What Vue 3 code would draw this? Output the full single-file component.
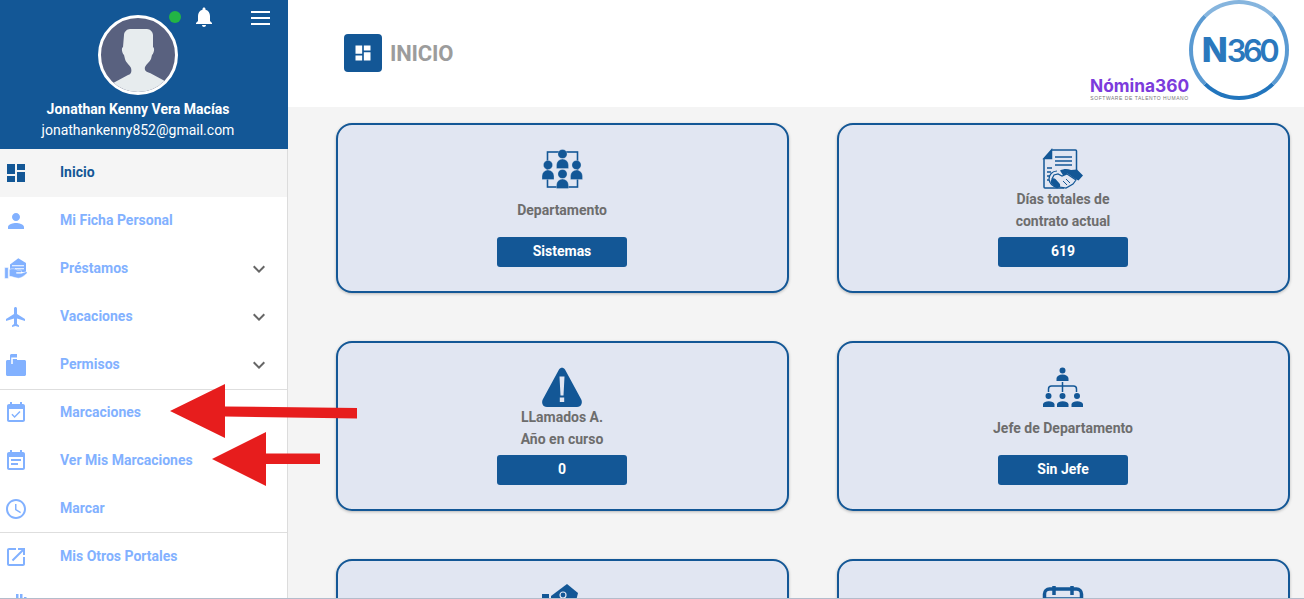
<script setup>
const menu = [
  { label: 'Inicio', active: true, d: 'M3 13h8V3H3v10zm0 8h8v-6H3v6zm10 0h8V11h-8v10zm0-18v6h8V3h-8z' },
  { label: 'Mi Ficha Personal', d: 'M12 12c2.21 0 4-1.79 4-4s-1.79-4-4-4-4 1.79-4 4 1.79 4 4 4zm0 2c-2.67 0-8 1.34-8 4v2h16v-2c0-2.66-5.33-4-8-4z' },
  { label: 'Préstamos', chevron: true, custom: 'loan' },
  { label: 'Vacaciones', chevron: true, d: 'M21 16v-2l-8-5V3.5c0-.83-.67-1.5-1.5-1.5S10 2.67 10 3.5V9l-8 5v2l8-2.5V19l-2 1.5V22l3.5-1 3.5 1v-1.5L13 19v-5.5l8 2.5z' },
  { label: 'Permisos', chevron: true, custom: 'case' },
  { label: 'Marcaciones', dividerTop: true, d: 'M16.53 11.06L15.47 10l-4.88 4.88-2.12-2.12-1.06 1.06L10.59 17l5.94-5.94zM19 3h-1V1h-2v2H8V1H6v2H5c-1.11 0-1.99.9-1.99 2L3 19c0 1.1.89 2 2 2h14c1.1 0 2-.9 2-2V5c0-1.1-.9-2-2-2zm0 16H5V8h14v11z' },
  { label: 'Ver Mis Marcaciones', d: 'M17 10H7v2h10v-2zm2-7h-1V1h-2v2H8V1H6v2H5c-1.11 0-1.99.9-1.99 2L3 19c0 1.1.89 2 2 2h14c1.1 0 2-.9 2-2V5c0-1.1-.9-2-2-2zm0 16H5V8h14v11zm-5-5H7v2h7v-2z' },
  { label: 'Marcar', divider: true, d: 'M11.99 2C6.47 2 2 6.48 2 12s4.47 10 9.99 10C17.52 22 22 17.52 22 12S17.52 2 11.99 2zM12 20c-4.42 0-8-3.58-8-8s3.58-8 8-8 8 3.58 8 8-3.58 8-8 8zm.5-13H11v6l5.25 3.15.75-1.23-4.5-2.67z' },
  { label: 'Mis Otros Portales', d: 'M19 19H5V5h7V3H5c-1.11 0-2 .9-2 2v14c0 1.1.89 2 2 2h14c1.1 0 2-.9 2-2v-7h-2v7zM14 3v2h3.59l-9.83 9.83 1.41 1.41L19 6.41V10h2V3h-7z' },
  { label: '', d: 'M8 5h2.500v17H8zM12 1h2.500v21H12zM16 1h2.500v21H16zM20 4h2.500v18H20z' },
]
const expand = 'M16.59 8.59L12 13.17 7.41 8.59 6 10l6 6 6-6z'
const person = (x, y) => `M${x + 4.600} ${y}a4.600 4.600 0 1 1-9.200 0a4.600 4.600 0 1 1 9.200 0zM${x - 6} ${y + 14.500}v-3.500a6 6 0 0 1 12 0v3.500z`
</script>

<template>
  <div class="page">
    <aside class="sidebar">
      <header class="profile">
        <svg class="avatar" viewBox="0 0 80 80" width="80" height="80">
          <defs><clipPath id="face"><circle cx="40" cy="40" r="37" /></clipPath></defs>
          <circle cx="40" cy="40" r="38.500" fill="#59617f" stroke="#fff" stroke-width="3" />
          <path clip-path="url(#face)" d="M26 20c0-3 3-6 6-6h17c3 0 6 3 6 6v12c2 1 1 6-1 8l-1 4c-1 3-5 5-6 8-1 4 2 5 5 6l13 7 5 3v12H12V70l5-3 13-7c3-1 4-3 3-7-1-3-5-5-6-9l-1-4c-2-2-3-7-1-8z" fill="#e7ecee" />
        </svg>
        <strong class="name">Jonathan Kenny Vera Macías</strong>
        <span class="email">jonathankenny852@gmail.com</span>
        <span class="dot"></span>
        <svg class="bell" viewBox="0 0 24 24" width="24" height="24"><path d="M12 22c1.100 0 2-.9 2-2h-4c0 1.100.9 2 2 2zm6-6v-5c0-3.070-1.630-5.640-4.500-6.320V4c0-.83-.67-1.500-1.500-1.500s-1.500.67-1.500 1.500v.68C7.640 5.360 6 7.920 6 11v5l-2 2v1h16v-1l-2-2z" fill="#fff" /></svg>
        <span class="burger"><i></i><i></i><i></i></span>
      </header>
      <nav class="menu">
        <a v-for="item in menu" :key="item.label" class="row" :class="{ active: item.active, divided: item.divider, 'divided-top': item.dividerTop }">
          <svg v-if="item.custom === 'loan'" class="icon" viewBox="0 0 24 24" width="24" height="24">
            <path d="M6 7.500 14.300 1.300 22 6V15H6z" fill="#82b1ff" />
            <path d="M8 8.800h12M11 11.800h9" stroke="#fff" stroke-width="1.100" />
            <path d="M.7 10.500h3.600v11H.7zM5.300 12.500c3-1.500 6-.8 8 .6h3.200c1.300 0 1.300 2.300 0 2.400h-4v.8h5l4.500-1.600c1-.2 1.500 1 .8 1.700-2.500 2.200-5.500 4.800-8.300 4.800-3.300 0-6-1.900-9.200-1.900z" fill="#82b1ff" stroke="#fff" stroke-width=".5" />
          </svg>
          <svg v-else-if="item.custom === 'case'" class="icon" viewBox="0 0 24 24" width="24" height="24">
            <path d="M6 2.500c0-.8.700-1.500 1.500-1.500H13v6h7.500c.8 0 1.500.7 1.500 1.500v13c0 .8-.7 1.500-1.500 1.500h-17C2.700 23 2 22.300 2 21.500v-13C2 7.700 2.700 7 3.500 7H6z" fill="#82b1ff" />
            <path d="M8 11V5.300H13.500" fill="none" stroke="#fff" stroke-width="1.500" />
          </svg>
          <svg v-else class="icon" viewBox="0 0 24 24" width="24" height="24"><path :d="item.d" /></svg>
          <span class="label">{{ item.label }}</span>
          <svg v-if="item.chevron" class="chev" viewBox="0 0 24 24" width="24" height="24"><path :d="expand" /></svg>
        </a>
      </nav>
    </aside>

    <main class="main">
      <header class="topbar">
        <div class="title">
          <span class="title-icon">
            <svg viewBox="0 0 24 24" width="20" height="20"><path d="M3 13h8V3H3v10zm0 8h8v-6H3v6zm10 0h8V11h-8v10zm0-18v6h8V3h-8z" fill="#fff" /></svg>
          </span>
          <h1>INICIO</h1>
        </div>
        <div class="logo">
          <div class="brand">
            <span class="brand-name">Nómina360</span>
            <span class="brand-sub">SOFTWARE DE TALENTO HUMANO</span>
          </div>
          <div class="ring">
            <span class="n360">N<span class="n360-num">360</span></span>
          </div>
        </div>
      </header>

      <section class="grid">
        <article class="card">
          <div class="card-icon">
            <svg viewBox="0 0 40 40" width="40" height="40">
              <rect x="5.500" y="3" width="30" height="35" fill="none" stroke="#135796" stroke-width="1.600" />
              <path v-for="p in [[20.500,5],[6,16],[34.500,16],[20.500,25]]" :key="p.join()" :d="person(p[0], p[1])" fill="#135796" stroke="#e1e6f2" stroke-width=".3" />
            </svg>
          </div>
          <p class="card-label">Departamento</p>
          <button class="value">Sistemas</button>
        </article>

        <article class="card">
          <div class="card-icon">
            <svg viewBox="0 0 42 40" width="42" height="40">
              <path d="M9.500 1H33.500a1 1 0 0 1 1 1V22M2 9.500 9.500 1V9.500zM2 9.500V38a1 1 0 0 0 1 1H22" fill="none" stroke="#135796" stroke-width="1.500" />
              <path d="M2 9.500 9.500 1V9.500z" fill="#135796" />
              <path d="M13 8h17M13 12h17M13 16h17M5 19h5M5 23h4M5 27h4M5 31h5" stroke="#135796" stroke-width="1.300" />
              <path d="M15 22c-5 0-8 4-8 8s4 8 8 8" fill="#e1e6f2" stroke="#135796" stroke-width="1.200" />
              <path d="M18 21.500c4-2 7-2 11-.5l6-.5 6 6-4.500 5-4-2-7-5-4 2.500z" fill="#135796" />
              <path d="M10 30l8 8 6 1 7-4 3-4-9-6-5 2-4-2-4 1z" fill="#e1e6f2" stroke="#135796" stroke-width="1.200" />
              <path d="M9.500 30.500a3 3 0 0 1 4-.5l4 4.500a3 3 0 0 1-.5 4 3 3 0 0 1-4-.3l-4-4a3 3 0 0 1 .5-3.700z" fill="#135796" />
              <path d="M21 32l4 4M24 30l4 4" stroke="#135796" stroke-width="1" />
            </svg>
          </div>
          <p class="card-label">Días totales de<br />contrato actual</p>
          <button class="value">619</button>
        </article>

        <article class="card">
          <div class="card-icon">
            <svg viewBox="0 0 40 40" width="40" height="40">
              <path d="M17 2.500c1.500-2.500 4.500-2.500 6 0L39 32c2 3.500.5 8-4 8H5c-4.500 0-6-4.500-4-8z" fill="#135796" />
              <path d="M17.500 9.500h5l-1 19h-3zM17.800 30.500h4.400v4.500h-4.400z" fill="#e1e6f2" />
            </svg>
          </div>
          <p class="card-label">LLamados A.<br />Año en curso</p>
          <button class="value">0</button>
        </article>

        <article class="card">
          <div class="card-icon">
            <svg viewBox="0 0 40 40" width="40" height="40">
              <path d="M22.500 3.500a3.000 3.000 0 1 1-6 0a3.000 3.000 0 1 1 6 0zM13.500 14v-2.500a6 4 0 0 1 12 0V14z" fill="#135796" />
              <path d="M19.500 15v10M5.500 25v-3a3 3 0 0 1 3-3h22a3 3 0 0 1 3 3v3" fill="none" stroke="#135796" stroke-width="1.500" />
              <path d="M8.500 29a3 3 0 1 1-6 0a3 3 0 1 1 6 0zM22.500 29a3 3 0 1 1-6 0a3 3 0 1 1 6 0zM37 29a3 3 0 1 1-6 0a3 3 0 1 1 6 0zM0 40v-3a6 4 0 0 1 11.500 0v3zM14 40v-3a6 4 0 0 1 11.500 0v3zM28.500 40v-3a6 4 0 0 1 11.500 0v3z" fill="#135796" />
            </svg>
          </div>
          <p class="card-label">Jefe de Departamento</p>
          <button class="value">Sin Jefe</button>
        </article>

        <article class="card">
          <div class="card-icon">
            <svg viewBox="0 0 40 40" width="40" height="40">
              <path d="M9 11 25 -1l11 9-2 8H9z" fill="#135796" />
              <circle cx="21" cy="10" r="3" fill="none" stroke="#e1e6f2" stroke-width="1.200" />
              <path d="M0 9h7v22H0z" fill="#135796" />
            </svg>
          </div>
        </article>

        <article class="card">
          <div class="card-icon">
            <svg viewBox="0 0 40 40" width="40" height="40">
              <path d="M1.500 38V9a5 5 0 0 1 5-5h27a5 5 0 0 1 5 5v29M1.500 14h37" fill="none" stroke="#135796" stroke-width="3.500" />
              <path d="M11 1v9M29 1v9" stroke="#135796" stroke-width="3.500" />
            </svg>
          </div>
        </article>
      </section>
    </main>

    <svg class="arrows" viewBox="0 0 1304 599" width="1304" height="599">
      <path d="M170 411 225 384V406.500L357 408V418.500L225 416.500V438z" fill="#e71d1d" />
      <path d="M212 459 266 432V453.500H320V464H266V486z" fill="#e71d1d" />
    </svg>
  </div>
</template>

<style scoped>
.page {
  position: relative;
  display: flex;
  height: 599px;
  overflow: hidden;
  box-sizing: border-box;
  border-bottom: 1px solid #b4bccb;
  background: #f4f4f4;
  font-family: Roboto, "Liberation Sans", sans-serif;
}
.sidebar {
  flex: 0 0 288px;
  box-sizing: border-box;
  background: #fff;
  border-right: 1px solid #dcdcdc;
}
.profile {
  position: relative;
  box-sizing: border-box;
  width: 288px;
  height: 149px;
  margin-right: -1px;
  padding: 15px 12px 0 0;
  display: flex;
  flex-direction: column;
  align-items: center;
  background: #135796;
  color: #fff;
  font-size: 14px;
}
.avatar { display: block; margin-bottom: 4px; }
.name { font-weight: 700; line-height: 20px; }
.email { line-height: 20px; margin-top: 1px; }
.dot {
  position: absolute;
  left: 169px;
  top: 11px;
  width: 12px;
  height: 12px;
  border-radius: 50%;
  background: #22b545;
}
.bell { position: absolute; left: 192px; top: 5px; }
.burger {
  position: absolute;
  left: 251px;
  top: 11px;
  display: flex;
  flex-direction: column;
  gap: 4px;
  width: 19px;
}
.burger i { display: block; height: 2px; background: #fff; }

.menu { display: flex; flex-direction: column; }
.row {
  box-sizing: border-box;
  height: 48px;
  flex: none;
  display: flex;
  align-items: center;
  padding-left: 4px;
  position: relative;
  color: #82b1ff;
  font-size: 14px;
  font-weight: 700;
}
.row.active { background: #f5f5f5; color: #135796; }
.row.divided { border-bottom: 1px solid #dedede; }
.row.divided-top { border-top: 1px solid #dedede; padding-bottom: 1px; }
.icon { flex: none; fill: currentColor; }
.label { margin-left: 32px; position: relative; top: -1px; }
.chev { position: absolute; left: 247px; top: 12px; fill: #666; }

.main { flex: 1; min-width: 0; display: flex; flex-direction: column; }
.topbar {
  flex: 0 0 107px;
  display: flex;
  justify-content: space-between;
  align-items: flex-start;
  padding: 0 15px 0 56px;
  background: #fff;
}
.title { display: flex; align-items: center; gap: 8px; margin-top: 34px; }
.title-icon {
  width: 38px;
  height: 38px;
  border-radius: 4px;
  background: #135796;
  display: flex;
  align-items: center;
  justify-content: center;
}
h1 {
  margin: 0;
  font-size: 22px;
  font-weight: 700;
  color: #9c9c9c;
  letter-spacing: -0.2px;
}
.logo { display: flex; align-items: flex-end; }
.brand { display: flex; flex-direction: column; align-items: center; width: 99px; margin-bottom: -1px; }
.brand-name {
  font-family: Inter, "Liberation Sans", sans-serif;
  font-size: 17.300px;
  line-height: 19px;
  font-weight: 700;
  color: #7c3bdc;
  white-space: nowrap;
}
.brand-sub {
  font-family: "Liberation Sans", sans-serif;
  font-size: 5px;
  line-height: 6px;
  color: #777;
  letter-spacing: .55px;
  white-space: nowrap;
}
.ring {
  box-sizing: border-box;
  width: 100px;
  height: 100px;
  border-radius: 50%;
  border: 4.500px solid #3a83c6;
  border-top-color: #86b5de;
  border-left-color: #5a9ad2;
  border-right-color: #5a9ad2;
  border-bottom-color: #2275bd;
  display: flex;
  align-items: center;
  justify-content: center;
}
.n360 {
  font-family: Inter, "Liberation Sans", sans-serif;
  font-size: 34px;
  line-height: 36px;
  font-weight: 800;
  color: #2a78bd;
  letter-spacing: -1px;
}
.n360-num {
  font-size: 31px;
  font-weight: 600;
  letter-spacing: -3.500px;
}

.grid {
  display: grid;
  grid-template-columns: 453px 453px;
  column-gap: 48px;
  row-gap: 48px;
  padding: 16px 0 0 48px;
}
.card {
  box-sizing: border-box;
  height: 170px;
  padding: 24px 1px 0 0;
  display: flex;
  flex-direction: column;
  align-items: center;
  background: #e1e6f2;
  border: 2px solid #135796;
  border-radius: 16px;
  box-shadow: 0 1px 3px rgba(0, 0, 0, .25);
}
.card-icon { height: 39px; display: flex; justify-content: center; }
.card-icon svg { display: block; overflow: visible; }
.card-label {
  height: 44px;
  margin: 0 0 5px;
  display: flex;
  align-items: center;
  text-align: center;
  font-size: 14px;
  line-height: 22px;
  font-weight: 700;
  color: #6d6d6d;
}
.value {
  width: 130px;
  height: 30px;
  padding: 0 0 2px;
  border: 0;
  border-radius: 3px;
  background: #135796;
  color: #fff;
  font: 700 14px Roboto, "Liberation Sans", sans-serif;
}
.arrows { position: absolute; left: 0; top: 0; pointer-events: none; }
</style>
